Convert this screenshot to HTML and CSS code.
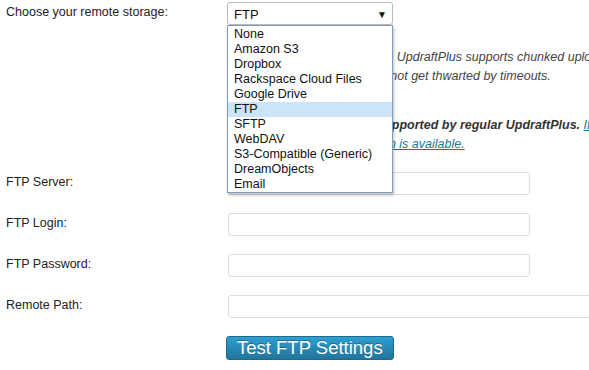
FILE: index.html
```html
<!DOCTYPE html>
<html lang="en">
<head>
    <meta charset="UTF-8">
    <meta name="viewport" content="width=device-width, initial-scale=1.0">
    <title>UpdraftPlus - Remote storage</title>
    <link rel="stylesheet" href="styles.css">
</head>
<body>
    <div class="settings">
        <div class="row row-storage">
            <div class="label">Choose your remote storage:</div>
            <div class="field">
                <div class="select-wrap">
                    <div class="select">
                        <span>FTP</span>
                        <span class="arrow">&#9660;</span>
                    </div>
                    <ul class="options">
                        <li>None</li>
                        <li>Amazon S3</li>
                        <li>Dropbox</li>
                        <li>Rackspace Cloud Files</li>
                        <li>Google Drive</li>
                        <li class="selected">FTP</li>
                        <li>SFTP</li>
                        <li>WebDAV</li>
                        <li>S3-Compatible (Generic)</li>
                        <li>DreamObjects</li>
                        <li>Email</li>
                    </ul>
                </div>
            </div>
        </div>

        <div class="row row-notes">
            <div class="label"></div>
            <div class="field notes">
                <p>FTP is a nice choice, because UpdraftPlus supports chunked uploading, so<br>
                uploads of large backups will not get thwarted by timeouts.</p>
                <p><strong>Only unencrypted FTP is supported by regular UpdraftPlus.</strong> <a href="#">If you want encryption (e.g. you are storing sensitive business data),</a><br>
                <a href="#">financial data), then an add-on is available.</a></p>
            </div>
        </div>

        <div class="row">
            <div class="label">FTP Server:</div>
            <div class="field"><input type="text" class="text-input"></div>
        </div>
        <div class="row">
            <div class="label">FTP Login:</div>
            <div class="field"><input type="text" class="text-input"></div>
        </div>
        <div class="row">
            <div class="label">FTP Password:</div>
            <div class="field"><input type="password" class="text-input"></div>
        </div>
        <div class="row">
            <div class="label">Remote Path:</div>
            <div class="field"><input type="text" class="text-input wide"></div>
        </div>

        <div class="row row-button">
            <div class="label"></div>
            <div class="field"><button class="btn">Test FTP Settings</button></div>
        </div>
    </div>
</body>
</html>
```

FILE: styles.css
```css
body {
    margin: 0;
    font-family: "Liberation Sans", Arial, sans-serif;
    font-size: 12.5px;
    color: #222;
    background: #fff;
    overflow: hidden;
}
.settings {
    padding-left: 6px;
    width: 800px;
}
.row {
    display: grid;
    grid-template-columns: 221px 1fr;
    align-items: start;
    margin-bottom: 18px;
}
.label {
    line-height: 15px;
    padding-top: 3px;
}
.row-storage {
    margin-bottom: 0;
    padding-top: 2px;
}
.select-wrap {
    position: relative;
    width: 166px;
    z-index: 2;
}
.select {
    display: flex;
    justify-content: space-between;
    align-items: center;
    box-sizing: border-box;
    height: 23px;
    padding: 2px 5px 0 6px;
    border: 1px solid #bbb;
    border-radius: 3px;
    color: #111;
    font-size: 13px;
}
.arrow {
    font-size: 10px;
}
.options {
    position: absolute;
    top: 23px;
    left: 0;
    width: 164px;
    margin: 0;
    padding: 1px 0 0;
    list-style: none;
    background: #fff;
    border: 1px solid #7f9db9;
    box-shadow: 1px 2px 3px rgba(0, 0, 0, 0.25);
    color: #111;
}
.options li {
    height: 15px;
    line-height: 15px;
    padding-left: 6px;
}
.options li.selected {
    background: #cce4f7;
}
.row-notes {
    margin-top: 23px;
}
.notes {
    font-style: italic;
    color: #444;
    white-space: nowrap;
}
.notes p {
    margin: 0 0 30px;
    line-height: 19px;
}
.notes p:last-child {
    margin-bottom: 0;
}
.notes strong {
    color: #333;
}
.notes a {
    color: #21759b;
}
.text-input {
    display: block;
    box-sizing: border-box;
    width: 302px;
    height: 23px;
    margin: 0 0 0 1px;
    border: 1px solid #ddd;
    border-radius: 3px;
    background: #fff;
}
.text-input.wide {
    width: 400px;
}
.row-button {
    margin-top: 3px;
}
.btn {
    height: 24px;
    padding: 0 10px;
    font-family: "Liberation Sans", Arial, sans-serif;
    font-size: 18.5px;
    line-height: 22px;
    color: #fff;
    background: linear-gradient(to bottom, #2e9fd2, #21759b);
    border: 1px solid #1e6a8d;
    border-radius: 3px;
    text-shadow: 0 -1px 0 rgba(0, 0, 0, 0.3);
    cursor: pointer;
    margin-left: -1px;
}
```
